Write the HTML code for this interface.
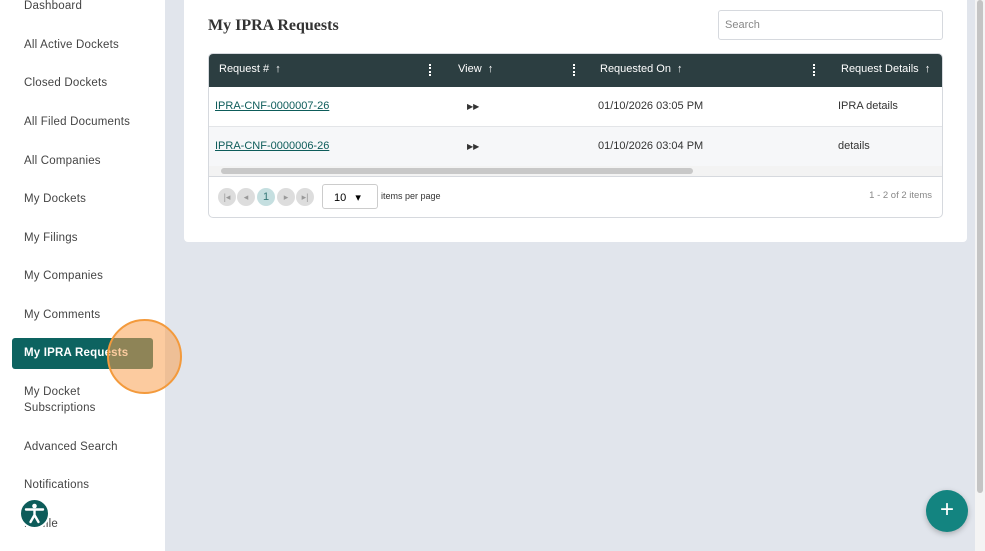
<!DOCTYPE html>
<html><head><style>
*{box-sizing:border-box;margin:0;padding:0}
body{width:985px;height:551px;overflow:hidden;background:#e1e5ec;font-family:"Liberation Sans",sans-serif;position:relative}
.side{position:absolute;left:0;top:0;width:165px;height:551px;background:#fff}
.side div{position:absolute;left:24px;font-size:11.5px;color:#444;letter-spacing:.2px;line-height:16px}
.act{position:absolute;left:12px;top:338px;width:141px;height:31px;background:#0d6360;border-radius:3px}
.card{position:absolute;left:184px;top:0;width:783px;height:242px;background:#fff;border-radius:0 0 4px 4px}
.t{position:absolute;left:208px;top:17px;font-family:"Liberation Serif",serif;font-weight:bold;font-size:16px;color:#333}
.search{position:absolute;left:718px;top:10px;width:225px;height:30px;border:1px solid #d6d9de;border-radius:3px;font-size:11px;color:#888;padding:8px 6px}
.tbl{position:absolute;left:208px;top:53px;width:735px;height:165px;border:1px solid #d6d9de;border-radius:5px;overflow:hidden}
.hd{position:absolute;left:0;top:0;width:735px;height:33px;background:#2c3e41}
.hd span{position:absolute;top:9px;font-size:11px;color:#fff}
.hd i{position:absolute;top:10px;width:2px;height:12px;border-left:2px dotted #fff}
.r{position:absolute;left:0;width:735px;height:40px;font-size:11px;color:#333;border-bottom:1px solid #e3e5e8}
.r span{position:absolute;top:13px}
.r a{color:#0d5c5a;text-decoration:underline}
.pg{position:absolute;top:134px;width:18px;height:18px;border-radius:50%;background:#ddd;font-size:9px;color:#999;text-align:center;line-height:18px}
</style></head><body>
<div class="side">
<div style="top:-2px">Dashboard</div>
<div style="top:37px">All Active Dockets</div>
<div style="top:75px">Closed Dockets</div>
<div style="top:114px">All Filed Documents</div>
<div style="top:153px">All Companies</div>
<div style="top:191px">My Dockets</div>
<div style="top:230px">My Filings</div>
<div style="top:268px">My Companies</div>
<div style="top:307px">My Comments</div>
<span class="act"></span>
<div style="top:345px;color:#fff;font-weight:bold">My IPRA Requests</div>
<div style="top:384px">My Docket<br>Subscriptions</div>
<div style="top:439px">Advanced Search</div>
<div style="top:477px">Notifications</div>
<div style="top:516px">Profile</div>
</div>
<div style="position:absolute;left:107px;top:319px;width:75px;height:75px;border-radius:50%;background:rgba(250,160,80,.55);border:2px solid #f39a3c"></div>
<div style="position:absolute;left:19px;top:498px;width:31px;height:31px;border-radius:50%;background:#0d5c5a;border:2px solid #fff"><svg width="27" height="27" viewBox="0 0 27 27"><circle cx="13.5" cy="6" r="2.3" fill="#fff"/><path d="M5 9.5h17M13.5 9.5v6M13.5 15l-4 7M13.5 15l4 7" stroke="#fff" stroke-width="2.4" fill="none" stroke-linecap="round"/></svg></div>
<div class="card"></div>
<div class="t">My IPRA Requests</div>
<div class="search">Search</div>
<div class="tbl">
<div class="hd">
<span style="left:10px">Request # &nbsp;↑</span><i style="left:220px"></i>
<span style="left:249px">View &nbsp;↑</span><i style="left:364px"></i>
<span style="left:391px">Requested On &nbsp;↑</span><i style="left:604px"></i>
<span style="left:632px">Request Details &nbsp;↑</span>
</div>
<div class="r" style="top:33px;background:#fff"><span style="left:6px"><a>IPRA-CNF-0000007-26</a></span><span style="left:258px;font-size:8px;top:15px">▶▶</span><span style="left:389px">01/10/2026 03:05 PM</span><span style="left:629px">IPRA details</span></div>
<div class="r" style="top:73px;background:#f6f7f9;border-bottom:none"><span style="left:6px"><a>IPRA-CNF-0000006-26</a></span><span style="left:258px;font-size:8px;top:15px">▶▶</span><span style="left:389px">01/10/2026 03:04 PM</span><span style="left:629px">details</span></div>
<div style="position:absolute;left:0;top:112px;width:735px;height:10px;background:#f3f3f3"></div>
<div style="position:absolute;left:12px;top:114px;width:472px;height:6px;border-radius:3px;background:#c8c8c8"></div>
<div style="position:absolute;left:0;top:122px;width:735px;border-top:1px solid #d6d9de"></div>
<div class="pg" style="left:9px">|◂</div><div class="pg" style="left:28px">◂</div><div class="pg" style="left:48px;background:#c5dfe0;color:#377;font-size:11px">1</div><div class="pg" style="left:68px">▸</div><div class="pg" style="left:87px">▸|</div>
<div style="position:absolute;left:113px;top:130px;width:56px;height:25px;border:1px solid #ccc;border-radius:3px;font-size:11px;padding:6px 11px">10 &nbsp;&nbsp;▾</div>
<span style="position:absolute;left:172px;top:137px;font-size:9px;color:#333">items per page</span>
<span style="position:absolute;right:10px;top:136px;font-size:9.5px;color:#888">1 - 2 of 2 items</span>
</div>
<div style="position:absolute;left:975px;top:0;width:10px;height:551px;background:#f4f4f4"></div>
<div style="position:absolute;left:977px;top:0;width:6px;height:493px;background:#c4c4c4;border-radius:3px"></div>
<div style="position:absolute;left:926px;top:490px;width:42px;height:42px;border-radius:50%;background:#138480;box-shadow:0 2px 6px rgba(0,0,0,.25);color:#fff;font-size:24px;text-align:center;line-height:40px">+</div>
</body></html>
